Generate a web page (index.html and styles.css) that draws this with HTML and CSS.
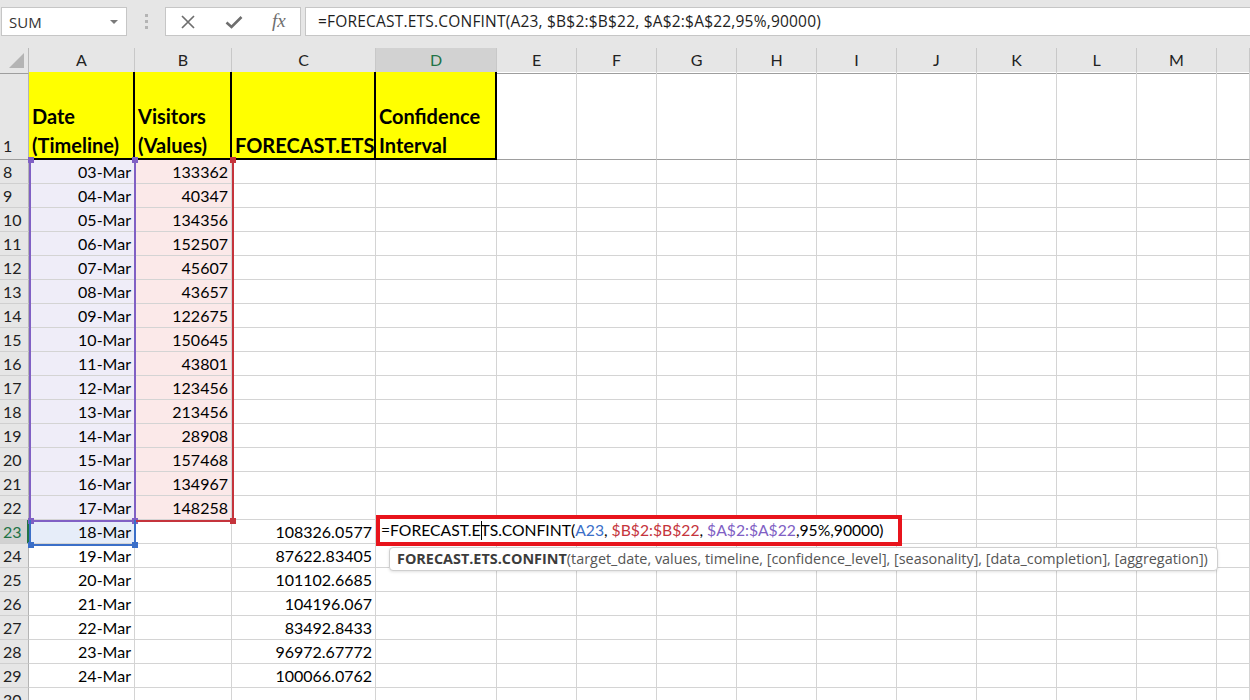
FILE: index.html
```html
<!DOCTYPE html>
<html>
<head>
<meta charset="utf-8">
<link rel="stylesheet" href="styles.css">
</head>
<body>
<div class="toolbar">
  <div class="namebox"><span>SUM</span><span class="caret"></span></div>
  <div class="sep"><i></i><i></i><i></i></div>
  <div class="iconbox">
    <svg class="ic" width="16" height="16" viewBox="0 0 16 16"><path d="M2 2 L14 14 M14 2 L2 14" stroke="#6e6e6e" stroke-width="1.7" fill="none"/></svg>
    <svg class="ic" width="18" height="16" viewBox="0 0 18 16"><path d="M1.5 8.5 L6.5 13 L16.5 3" stroke="#6e6e6e" stroke-width="2.6" fill="none"/></svg>
    <span class="fx">fx</span>
  </div>
  <div class="formula">=FORECAST.ETS.CONFINT(A23, $B$2:$B$22, $A$2:$A$22,95%,90000)</div>
</div>

<div class="sheet">
  <div class="row head">
    <div class="corner"><span class="tri"></span></div>
    <div class="ch">A</div><div class="ch">B</div><div class="ch">C</div><div class="ch sel">D</div><div class="ch">E</div><div class="ch">F</div><div class="ch">G</div><div class="ch">H</div><div class="ch">I</div><div class="ch">J</div><div class="ch">K</div><div class="ch">L</div><div class="ch">M</div><div class="ch"></div>
  </div>
  <div class="row r1">
    <div class="rh">1</div>
    <div class="c y"><span>Date<br>(Timeline)</span></div><div class="c y"><span>Visitors<br>(Values)</span></div><div class="c y"><span>FORECAST.ETS</span></div><div class="c y"><span>Confidence<br>Interval</span></div>
    <div class="c"></div><div class="c"></div><div class="c"></div><div class="c"></div><div class="c"></div><div class="c"></div><div class="c"></div><div class="c"></div><div class="c"></div><div class="c"></div>
  </div>
  <div class="row"><div class="rh">8</div><div class="c ca">03-Mar</div><div class="c cb">133362</div><div class="c"></div><div class="c"></div><div class="c"></div><div class="c"></div><div class="c"></div><div class="c"></div><div class="c"></div><div class="c"></div><div class="c"></div><div class="c"></div><div class="c"></div><div class="c"></div></div>
  <div class="row"><div class="rh">9</div><div class="c ca">04-Mar</div><div class="c cb">40347</div><div class="c"></div><div class="c"></div><div class="c"></div><div class="c"></div><div class="c"></div><div class="c"></div><div class="c"></div><div class="c"></div><div class="c"></div><div class="c"></div><div class="c"></div><div class="c"></div></div>
  <div class="row"><div class="rh">10</div><div class="c ca">05-Mar</div><div class="c cb">134356</div><div class="c"></div><div class="c"></div><div class="c"></div><div class="c"></div><div class="c"></div><div class="c"></div><div class="c"></div><div class="c"></div><div class="c"></div><div class="c"></div><div class="c"></div><div class="c"></div></div>
  <div class="row"><div class="rh">11</div><div class="c ca">06-Mar</div><div class="c cb">152507</div><div class="c"></div><div class="c"></div><div class="c"></div><div class="c"></div><div class="c"></div><div class="c"></div><div class="c"></div><div class="c"></div><div class="c"></div><div class="c"></div><div class="c"></div><div class="c"></div></div>
  <div class="row"><div class="rh">12</div><div class="c ca">07-Mar</div><div class="c cb">45607</div><div class="c"></div><div class="c"></div><div class="c"></div><div class="c"></div><div class="c"></div><div class="c"></div><div class="c"></div><div class="c"></div><div class="c"></div><div class="c"></div><div class="c"></div><div class="c"></div></div>
  <div class="row"><div class="rh">13</div><div class="c ca">08-Mar</div><div class="c cb">43657</div><div class="c"></div><div class="c"></div><div class="c"></div><div class="c"></div><div class="c"></div><div class="c"></div><div class="c"></div><div class="c"></div><div class="c"></div><div class="c"></div><div class="c"></div><div class="c"></div></div>
  <div class="row"><div class="rh">14</div><div class="c ca">09-Mar</div><div class="c cb">122675</div><div class="c"></div><div class="c"></div><div class="c"></div><div class="c"></div><div class="c"></div><div class="c"></div><div class="c"></div><div class="c"></div><div class="c"></div><div class="c"></div><div class="c"></div><div class="c"></div></div>
  <div class="row"><div class="rh">15</div><div class="c ca">10-Mar</div><div class="c cb">150645</div><div class="c"></div><div class="c"></div><div class="c"></div><div class="c"></div><div class="c"></div><div class="c"></div><div class="c"></div><div class="c"></div><div class="c"></div><div class="c"></div><div class="c"></div><div class="c"></div></div>
  <div class="row"><div class="rh">16</div><div class="c ca">11-Mar</div><div class="c cb">43801</div><div class="c"></div><div class="c"></div><div class="c"></div><div class="c"></div><div class="c"></div><div class="c"></div><div class="c"></div><div class="c"></div><div class="c"></div><div class="c"></div><div class="c"></div><div class="c"></div></div>
  <div class="row"><div class="rh">17</div><div class="c ca">12-Mar</div><div class="c cb">123456</div><div class="c"></div><div class="c"></div><div class="c"></div><div class="c"></div><div class="c"></div><div class="c"></div><div class="c"></div><div class="c"></div><div class="c"></div><div class="c"></div><div class="c"></div><div class="c"></div></div>
  <div class="row"><div class="rh">18</div><div class="c ca">13-Mar</div><div class="c cb">213456</div><div class="c"></div><div class="c"></div><div class="c"></div><div class="c"></div><div class="c"></div><div class="c"></div><div class="c"></div><div class="c"></div><div class="c"></div><div class="c"></div><div class="c"></div><div class="c"></div></div>
  <div class="row"><div class="rh">19</div><div class="c ca">14-Mar</div><div class="c cb">28908</div><div class="c"></div><div class="c"></div><div class="c"></div><div class="c"></div><div class="c"></div><div class="c"></div><div class="c"></div><div class="c"></div><div class="c"></div><div class="c"></div><div class="c"></div><div class="c"></div></div>
  <div class="row"><div class="rh">20</div><div class="c ca">15-Mar</div><div class="c cb">157468</div><div class="c"></div><div class="c"></div><div class="c"></div><div class="c"></div><div class="c"></div><div class="c"></div><div class="c"></div><div class="c"></div><div class="c"></div><div class="c"></div><div class="c"></div><div class="c"></div></div>
  <div class="row"><div class="rh">21</div><div class="c ca">16-Mar</div><div class="c cb">134967</div><div class="c"></div><div class="c"></div><div class="c"></div><div class="c"></div><div class="c"></div><div class="c"></div><div class="c"></div><div class="c"></div><div class="c"></div><div class="c"></div><div class="c"></div><div class="c"></div></div>
  <div class="row"><div class="rh">22</div><div class="c ca">17-Mar</div><div class="c cb">148258</div><div class="c"></div><div class="c"></div><div class="c"></div><div class="c"></div><div class="c"></div><div class="c"></div><div class="c"></div><div class="c"></div><div class="c"></div><div class="c"></div><div class="c"></div><div class="c"></div></div>
  <div class="row"><div class="rh act">23</div><div class="c cc">18-Mar</div><div class="c"></div><div class="c">108326.0577</div><div class="c"></div><div class="c"></div><div class="c"></div><div class="c"></div><div class="c"></div><div class="c"></div><div class="c"></div><div class="c"></div><div class="c"></div><div class="c"></div><div class="c"></div></div>
  <div class="row"><div class="rh">24</div><div class="c">19-Mar</div><div class="c"></div><div class="c">87622.83405</div><div class="c"></div><div class="c"></div><div class="c"></div><div class="c"></div><div class="c"></div><div class="c"></div><div class="c"></div><div class="c"></div><div class="c"></div><div class="c"></div><div class="c"></div></div>
  <div class="row"><div class="rh">25</div><div class="c">20-Mar</div><div class="c"></div><div class="c">101102.6685</div><div class="c"></div><div class="c"></div><div class="c"></div><div class="c"></div><div class="c"></div><div class="c"></div><div class="c"></div><div class="c"></div><div class="c"></div><div class="c"></div><div class="c"></div></div>
  <div class="row"><div class="rh">26</div><div class="c">21-Mar</div><div class="c"></div><div class="c">104196.067</div><div class="c"></div><div class="c"></div><div class="c"></div><div class="c"></div><div class="c"></div><div class="c"></div><div class="c"></div><div class="c"></div><div class="c"></div><div class="c"></div><div class="c"></div></div>
  <div class="row"><div class="rh">27</div><div class="c">22-Mar</div><div class="c"></div><div class="c">83492.8433</div><div class="c"></div><div class="c"></div><div class="c"></div><div class="c"></div><div class="c"></div><div class="c"></div><div class="c"></div><div class="c"></div><div class="c"></div><div class="c"></div><div class="c"></div></div>
  <div class="row"><div class="rh">28</div><div class="c">23-Mar</div><div class="c"></div><div class="c">96972.67772</div><div class="c"></div><div class="c"></div><div class="c"></div><div class="c"></div><div class="c"></div><div class="c"></div><div class="c"></div><div class="c"></div><div class="c"></div><div class="c"></div><div class="c"></div></div>
  <div class="row"><div class="rh">29</div><div class="c">24-Mar</div><div class="c"></div><div class="c">100066.0762</div><div class="c"></div><div class="c"></div><div class="c"></div><div class="c"></div><div class="c"></div><div class="c"></div><div class="c"></div><div class="c"></div><div class="c"></div><div class="c"></div><div class="c"></div></div>
  <div class="row"><div class="rh">30</div><div class="c"></div><div class="c"></div><div class="c"></div><div class="c"></div><div class="c"></div><div class="c"></div><div class="c"></div><div class="c"></div><div class="c"></div><div class="c"></div><div class="c"></div><div class="c"></div><div class="c"></div><div class="c"></div></div>

  <div class="rng rng-a"><i class="h tl"></i><i class="h tr"></i><i class="h bl"></i><i class="h br"></i></div>
  <div class="rng rng-b"><i class="h tr"></i><i class="h br"></i></div>
  <div class="rng rng-c"><i class="h bl"></i><i class="h br"></i></div>

  <div class="editor">=FORECAST.E<span class="caretline"></span>TS.CONFINT(<span class="ref1">A23</span>, <span class="ref2">$B$2:$B$22</span>, <span class="ref3">$A$2:$A$22</span>,95%,90000)</div>
  <div class="tip"><b>FORECAST.ETS.CONFINT</b>(target_date, values, timeline, [confidence_level], [seasonality], [data_completion], [aggregation])</div>
</div>
</body>
</html>
```
FILE: styles.css
```css
html, body {
  margin: 0;
  padding: 0;
}
body {
  width: 1250px;
  height: 700px;
  overflow: hidden;
  background: #ffffff;
  font-family: Lato, "Liberation Sans", sans-serif;
  color: #000;
}

/* ---------- formula toolbar ---------- */
.toolbar {
  height: 48px;
  box-sizing: border-box;
  padding-top: 7px;
  background: #e6e6e6;
  display: flex;
  align-items: flex-start;
}
.namebox {
  margin-left: 1px;
  width: 126px;
  height: 29px;
  box-sizing: border-box;
  background: #fff;
  border: 1px solid #c6c6c6;
  display: flex;
  align-items: center;
  justify-content: space-between;
  padding: 0 8px 0 7px;
  font: 15px "Open Sans", sans-serif;
  color: #333;
}
.caret {
  width: 0;
  height: 0;
  border-left: 4px solid transparent;
  border-right: 4px solid transparent;
  border-top: 4px solid #7a7a7a;
}
.sep {
  width: 38px;
  height: 29px;
  display: flex;
  flex-direction: column;
  align-items: center;
  justify-content: center;
  gap: 3px;
}
.sep i {
  display: block;
  width: 3px;
  height: 3px;
  background: #b4b4b4;
}
.iconbox {
  width: 136px;
  height: 29px;
  box-sizing: border-box;
  background: #fff;
  border: 1px solid #c6c6c6;
  display: flex;
  align-items: center;
  justify-content: space-around;
}
.ic {
  display: block;
}
.fx {
  font: italic 19px "Liberation Serif", serif;
  color: #6e6e6e;
  line-height: 1;
  margin-top: -2px;
}
.formula {
  margin-left: 4px;
  flex: 1;
  height: 29px;
  box-sizing: border-box;
  background: #fff;
  border: 1px solid #c6c6c6;
  border-right: none;
  padding-left: 12px;
  font: 15.5px "Open Sans", sans-serif;
  letter-spacing: 0.2px;
  line-height: 27px;
  color: #1e1e1e;
  white-space: nowrap;
}

/* ---------- sheet ---------- */
.sheet {
  position: relative;
}
.row {
  display: grid;
  grid-template-columns: 29px 106px 97px 144px 121px repeat(9, 80px) 1fr;
  height: 24px;
}
.head {
  background: #e6e6e6;
}
.corner {
  border-right: 1px solid #b9b9b9;
  border-bottom: 1px solid #9e9e9e;
  position: relative;
}
.tri {
  position: absolute;
  right: 4px;
  bottom: 5px;
  width: 0;
  height: 0;
  border-left: 15px solid transparent;
  border-bottom: 15px solid #b4b4b4;
}
.ch {
  box-sizing: border-box;
  border-bottom: 1px solid #9e9e9e;
  border-right: 1px solid #c8c8c8;
  font-size: 16px;
  line-height: 24px;
  text-align: center;
  color: #222;
}
.ch.sel {
  background: #d2d2d2;
  color: #217346;
  border-bottom: 2px solid #217346;
}
.rh {
  box-sizing: border-box;
  background: #e6e6e6;
  border-right: 1px solid #b4b4b4;
  border-bottom: 1px solid #d0d0d0;
  font-size: 16px;
  line-height: 23px;
  padding-left: 3px;
  color: #222;
}
.rh.act {
  background: #d2d2d2;
  color: #217346;
  border-right: 2px solid #217346;
}
.c {
  box-sizing: border-box;
  border-right: 1px solid #d4d4d4;
  border-bottom: 1px solid #d4d4d4;
  font-size: 16px;
  line-height: 23px;
  text-align: right;
  padding-right: 3px;
  white-space: nowrap;
}
.ca { background: #efedf8; }
.cb { background: #fbe9e9; }
.cc { background: #e6edf9; }

/* header row 1 */
.r1 {
  height: 88px;
}
.r1 .rh {
  display: flex;
  align-items: flex-end;
  padding-bottom: 2px;
  border-bottom: 1px solid #9e9e9e;
}
.r1 .c {
  border-bottom: 1px solid #9e9e9e;
}
.r1 .c.y {
  background: #ffff00;
  border-right: 2px solid #000;
  border-bottom: 2px solid #000;
  display: flex;
  align-items: flex-end;
  text-align: left;
  padding: 0 0 0 3px;
  font-weight: 700;
  font-size: 20px;
  line-height: 29px;
  overflow: hidden;
}
.r1 .c.y span {
  margin-bottom: -2px;
}

/* range highlight overlays */
.rng {
  position: absolute;
  box-sizing: border-box;
}
.rng-a {
  left: 29px;
  top: 112px;
  width: 107px;
  height: 362px;
  border: 2px solid #8060c4;
  border-top: none;
}
.rng-b {
  left: 135px;
  top: 112px;
  width: 99px;
  height: 362px;
  border: 2px solid #c5343c;
  border-top: none;
  border-left: none;
}
.rng-c {
  left: 29px;
  top: 472px;
  width: 107px;
  height: 26px;
  border: 2px solid #3b6fc8;
  border-top: none;
}
.h {
  position: absolute;
  width: 6px;
  height: 6px;
}
.rng-a .h { background: #8060c4; }
.rng-b .h { background: #c5343c; }
.rng-c .h { background: #3b6fc8; }
.tl { left: -3px; top: -3px; }
.tr { right: -4px; top: -3px; }
.bl { left: -3px; bottom: -4px; }
.br { right: -4px; bottom: -4px; }

/* in-cell editor */
.editor {
  position: absolute;
  left: 376px;
  top: 467px;
  width: 526px;
  height: 31px;
  box-sizing: border-box;
  border: 4px solid #e8141c;
  background: #fff;
  padding-left: 1px;
  font-size: 15.7px;
  line-height: 23px;
  white-space: nowrap;
  color: #000;
}
.caretline {
  display: inline-block;
  width: 1px;
  height: 19px;
  background: #000;
  vertical-align: -4px;
  margin: 0 -1px 0 0;
}
.ref1 { color: #3b6fc8; }
.ref2 { color: #c5343c; }
.ref3 { color: #8060c4; }

.tip {
  position: absolute;
  left: 389px;
  top: 499px;
  width: 829px;
  height: 24px;
  box-sizing: border-box;
  background: #fff;
  border: 1px solid #cfcfcf;
  border-radius: 4px;
  box-shadow: 0 1px 3px rgba(0, 0, 0, 0.12);
  padding-left: 7px;
  font: 14.4px "Open Sans", sans-serif;
  line-height: 22px;
  color: #555;
  white-space: nowrap;
}
.tip b {
  color: #3c3c3c;
}
```
